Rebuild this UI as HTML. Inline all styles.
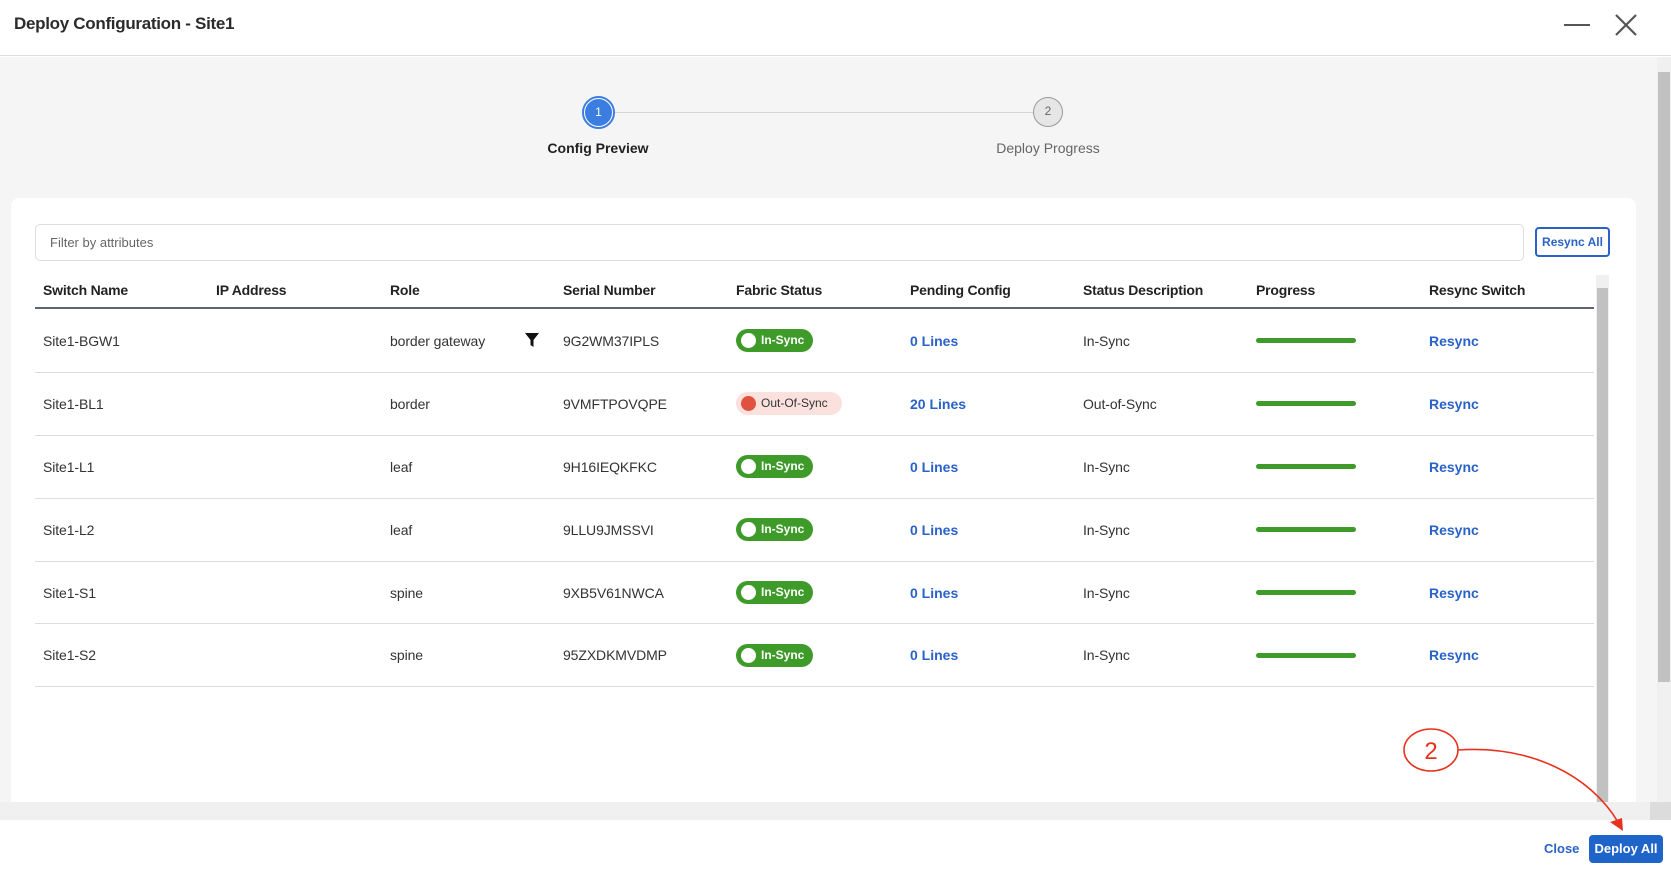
<!DOCTYPE html>
<html><head><meta charset="utf-8"><style>
*{box-sizing:border-box;margin:0;padding:0}
body{width:1671px;height:870px;overflow:hidden;background:#fff;font-family:"Liberation Sans",sans-serif;position:relative;color:#333}
.abs{position:absolute}
.hdr{left:0;top:0;width:1671px;height:56px;border-bottom:1px solid #ddd;background:#fff}
.title{left:14px;top:14px;font-size:17px;font-weight:bold;color:#2b2b2b;letter-spacing:-0.3px}
.main{left:0;top:57px;width:1657px;height:745px;background:#f5f5f5}
.card{left:11px;top:198px;width:1625px;height:620px;background:#fff;border-radius:8px}
.th{position:absolute;top:282px;font-size:14px;font-weight:bold;color:#222;letter-spacing:-0.2px}
.td{position:absolute;font-size:14px;color:#333;letter-spacing:-0.1px}
.lnk{position:absolute;font-size:14px;font-weight:bold;color:#2a62c9}
.pill{position:absolute;width:77px;height:23px;border-radius:12px;background:#3e9b2a;color:#fff;font-size:12px;font-weight:bold;padding-left:25px;line-height:23px}
.pill:before{content:"";position:absolute;left:5px;top:4px;width:15px;height:15px;border-radius:50%;background:#fff}
.pill.out{background:#fbe1de;color:#333;width:106px;font-weight:normal}
.pill.out:before{background:#e0513f}
.bar{position:absolute;left:1256px;width:100px;height:5px;border-radius:3px;background:#3e9b2a}
.rl{position:absolute;left:35px;width:1559px;height:1px;background:#ddd}
</style></head><body>
<div class="abs hdr"></div>
<div class="abs title">Deploy Configuration - Site1</div>
<div class="abs" style="left:1564px;top:24px;width:26px;height:2px;background:#555"></div>
<svg class="abs" style="left:1614px;top:13px" width="24" height="24"><path d="M2 2L22 22M22 2L2 22" stroke="#555" stroke-width="2.2"/></svg>
<div class="abs main"></div>
<div class="abs" style="left:615px;top:112px;width:418px;height:1px;background:#d5d5d5"></div>
<div class="abs" style="left:582px;top:96px;width:33px;height:33px;border-radius:50%;border:2px solid #3b7de0;background:#fff"></div>
<div class="abs" style="left:585px;top:99px;width:27px;height:27px;border-radius:50%;background:#3b7de0;color:#fff;font-size:12px;text-align:center;line-height:27px">1</div>
<div class="abs" style="left:498px;top:140px;width:200px;text-align:center;font-size:14px;font-weight:bold;color:#222">Config Preview</div>
<div class="abs" style="left:1033px;top:97px;width:30px;height:30px;border-radius:50%;border:1.5px solid #999;background:#e6e6e6;color:#666;font-size:12px;text-align:center;line-height:27px">2</div>
<div class="abs" style="left:948px;top:140px;width:200px;text-align:center;font-size:14px;color:#666">Deploy Progress</div>
<div class="abs card"></div>
<div class="abs" style="left:35px;top:224px;width:1489px;height:37px;border:1.5px solid #ddd;border-radius:5px;font-size:13px;color:#666;padding:10px 14px">Filter by attributes</div>
<div class="abs" style="left:1535px;top:227px;width:75px;height:30px;border:2px solid #2a62c9;border-radius:4px;font-size:12px;font-weight:bold;color:#2a62c9;text-align:center;line-height:26px">Resync All</div>
<div class="th" style="left:43px">Switch Name</div>
<div class="th" style="left:216px">IP Address</div>
<div class="th" style="left:390px">Role</div>
<div class="th" style="left:563px">Serial Number</div>
<div class="th" style="left:736px">Fabric Status</div>
<div class="th" style="left:910px">Pending Config</div>
<div class="th" style="left:1083px">Status Description</div>
<div class="th" style="left:1256px">Progress</div>
<div class="th" style="left:1429px">Resync Switch</div>
<div class="abs" style="left:35px;top:307px;width:1559px;height:2px;background:#5d6570"></div>
<svg class="abs" style="left:525px;top:333px" width="14" height="14"><path d="M0 0H14L8.5 7V14L5.5 12V7Z" fill="#111"/></svg>
<div class="rl" style="top:372px"></div><div class="rl" style="top:435px"></div><div class="rl" style="top:498px"></div><div class="rl" style="top:561px"></div><div class="rl" style="top:623px"></div><div class="rl" style="top:686px"></div>

<div class="td" style="left:43px;top:333px">Site1-BGW1</div><div class="td" style="left:390px;top:333px">border gateway</div><div class="td" style="left:563px;top:333px">9G2WM37IPLS</div><div class="pill" style="left:736px;top:329px">In-Sync</div><div class="lnk" style="left:910px;top:333px">0 Lines</div><div class="td" style="left:1083px;top:333px">In-Sync</div><div class="bar" style="top:338px"></div><div class="lnk" style="left:1429px;top:333px">Resync</div>

<div class="td" style="left:43px;top:396px">Site1-BL1</div><div class="td" style="left:390px;top:396px">border</div><div class="td" style="left:563px;top:396px">9VMFTPOVQPE</div><div class="pill out" style="left:736px;top:392px">Out-Of-Sync</div><div class="lnk" style="left:910px;top:396px">20 Lines</div><div class="td" style="left:1083px;top:396px">Out-of-Sync</div><div class="bar" style="top:401px"></div><div class="lnk" style="left:1429px;top:396px">Resync</div>

<div class="td" style="left:43px;top:459px">Site1-L1</div><div class="td" style="left:390px;top:459px">leaf</div><div class="td" style="left:563px;top:459px">9H16IEQKFKC</div><div class="pill" style="left:736px;top:455px">In-Sync</div><div class="lnk" style="left:910px;top:459px">0 Lines</div><div class="td" style="left:1083px;top:459px">In-Sync</div><div class="bar" style="top:464px"></div><div class="lnk" style="left:1429px;top:459px">Resync</div>

<div class="td" style="left:43px;top:522px">Site1-L2</div><div class="td" style="left:390px;top:522px">leaf</div><div class="td" style="left:563px;top:522px">9LLU9JMSSVI</div><div class="pill" style="left:736px;top:518px">In-Sync</div><div class="lnk" style="left:910px;top:522px">0 Lines</div><div class="td" style="left:1083px;top:522px">In-Sync</div><div class="bar" style="top:527px"></div><div class="lnk" style="left:1429px;top:522px">Resync</div>

<div class="td" style="left:43px;top:585px">Site1-S1</div><div class="td" style="left:390px;top:585px">spine</div><div class="td" style="left:563px;top:585px">9XB5V61NWCA</div><div class="pill" style="left:736px;top:581px">In-Sync</div><div class="lnk" style="left:910px;top:585px">0 Lines</div><div class="td" style="left:1083px;top:585px">In-Sync</div><div class="bar" style="top:590px"></div><div class="lnk" style="left:1429px;top:585px">Resync</div>

<div class="td" style="left:43px;top:647px">Site1-S2</div><div class="td" style="left:390px;top:647px">spine</div><div class="td" style="left:563px;top:647px">95ZXDKMVDMP</div><div class="pill" style="left:736px;top:644px">In-Sync</div><div class="lnk" style="left:910px;top:647px">0 Lines</div><div class="td" style="left:1083px;top:647px">In-Sync</div><div class="bar" style="top:653px"></div><div class="lnk" style="left:1429px;top:647px">Resync</div>

<div class="abs" style="left:1596px;top:275px;width:13px;height:527px;background:#f0f0f0"></div>
<div class="abs" style="left:1597px;top:288px;width:11px;height:514px;background:#c1c1c1"></div>
<div class="abs" style="left:1657px;top:57px;width:14px;height:745px;background:#f0f0f0"></div>
<div class="abs" style="left:1658px;top:72px;width:12px;height:610px;background:#c1c1c1"></div>
<div class="abs" style="left:0;top:802px;width:1671px;height:18px;background:#f0f0f0"></div>
<div class="abs" style="left:1650px;top:802px;width:21px;height:18px;background:#dcdcdc"></div>
<div class="abs" style="left:0;top:820px;width:1671px;height:50px;background:#fff"></div>
<div class="abs" style="left:1544px;top:841px;font-size:13px;font-weight:bold;color:#2a62c9">Close</div>
<div class="abs" style="left:1589px;top:835px;width:74px;height:28px;border-radius:4px;background:#1f64c8;color:#fff;font-size:13px;font-weight:bold;text-align:center;line-height:28px">Deploy All</div>
<svg class="abs" style="left:0;top:0" width="1671" height="870">
<ellipse cx="1431" cy="750" rx="27" ry="21" fill="none" stroke="#e8321e" stroke-width="1.6"/>
<text x="1431" y="759" font-family="Liberation Sans" font-size="24" fill="#e8321e" text-anchor="middle">2</text>
<path d="M1458 750C1530 745 1590 775 1618 822" fill="none" stroke="#e8321e" stroke-width="1.6"/>
<path d="M1623 831L1610 822L1622 818Z" fill="#e8321e"/>
</svg>
</body></html>
